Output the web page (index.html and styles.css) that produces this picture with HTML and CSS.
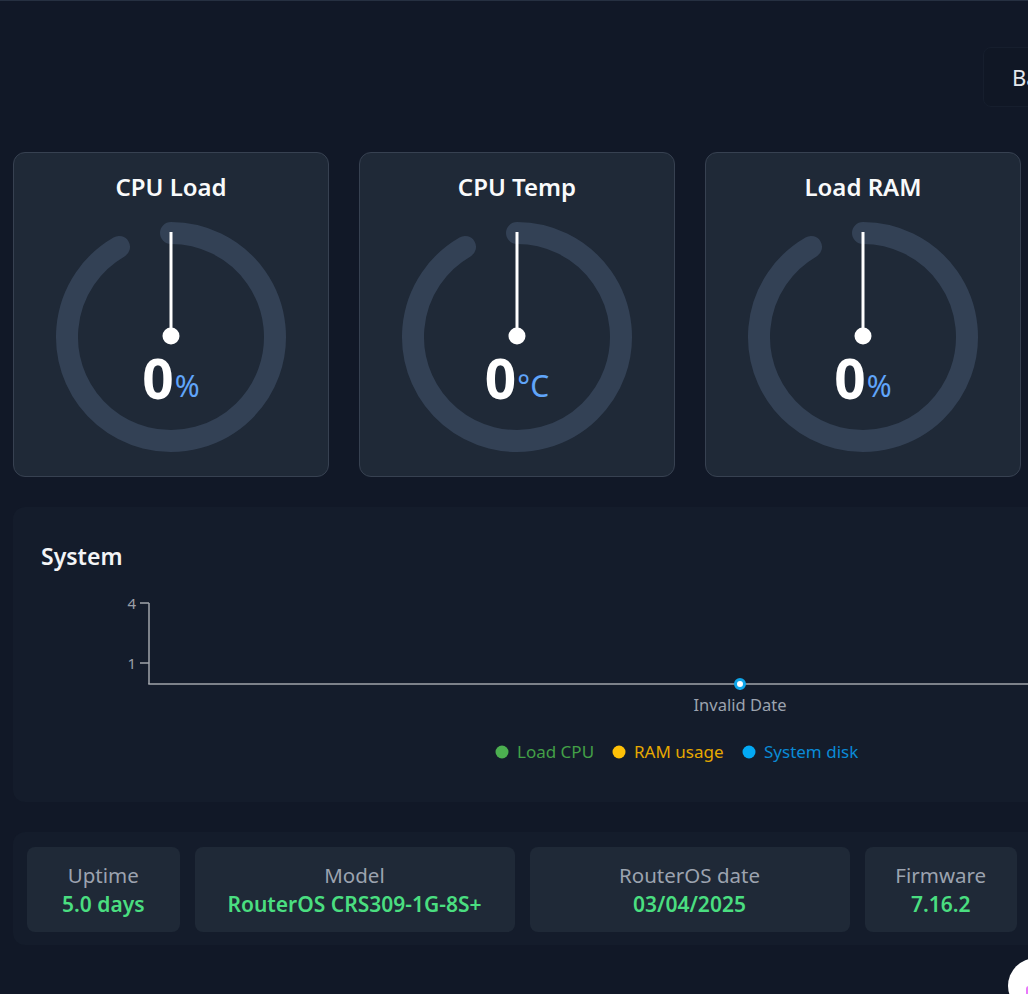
FILE: index.html
```html
<!DOCTYPE html>
<html lang="en">
<head>
<meta charset="utf-8">
<title>Dashboard</title>
<link rel="stylesheet" href="styles.css">
</head>
<body>
<div class="page">
  <header class="toolbar">
    <button class="tool-btn">Backup</button>
  </header>

  <section class="gauges">
    <div class="gauge-card">
      <h3 class="gauge-title">CPU Load</h3>
      <div class="gauge">
        <svg class="gauge-svg" width="240" height="240" viewBox="0 0 240 240">
          <path class="gauge-track" d="M120 16 A104 104 0 1 1 68 29.93"/>
          <line class="gauge-needle" x1="120" y1="15" x2="120" y2="119"/>
          <circle class="gauge-hub" cx="120" cy="119" r="8.5"/>
        </svg>
        <div class="gauge-value"><span class="num">0</span><span class="unit">%</span></div>
      </div>
    </div>
    <div class="gauge-card">
      <h3 class="gauge-title">CPU Temp</h3>
      <div class="gauge">
        <svg class="gauge-svg" width="240" height="240" viewBox="0 0 240 240">
          <path class="gauge-track" d="M120 16 A104 104 0 1 1 68 29.93"/>
          <line class="gauge-needle" x1="120" y1="15" x2="120" y2="119"/>
          <circle class="gauge-hub" cx="120" cy="119" r="8.5"/>
        </svg>
        <div class="gauge-value"><span class="num">0</span><span class="unit">°C</span></div>
      </div>
    </div>
    <div class="gauge-card">
      <h3 class="gauge-title">Load RAM</h3>
      <div class="gauge">
        <svg class="gauge-svg" width="240" height="240" viewBox="0 0 240 240">
          <path class="gauge-track" d="M120 16 A104 104 0 1 1 68 29.93"/>
          <line class="gauge-needle" x1="120" y1="15" x2="120" y2="119"/>
          <circle class="gauge-hub" cx="120" cy="119" r="8.5"/>
        </svg>
        <div class="gauge-value"><span class="num">0</span><span class="unit">%</span></div>
      </div>
    </div>
  </section>

  <section class="panel chart-panel">
    <h2 class="panel-title">System</h2>
    <svg class="chart" width="1320" height="200" viewBox="0 0 1320 200">
      <g class="axis">
        <line x1="108" y1="32" x2="108" y2="113"/>
        <line x1="99" y1="32" x2="108" y2="32"/>
        <line x1="99" y1="92" x2="108" y2="92"/>
        <line x1="107.25" y1="113" x2="1320" y2="113"/>
        <line x1="699" y1="113" x2="699" y2="119"/>
      </g>
      <text class="tick-label" x="95" y="38" text-anchor="end">4</text>
      <text class="tick-label" x="95" y="98" text-anchor="end">1</text>
      <circle class="point" cx="699" cy="113" r="4.5"/>
      <text class="x-label" x="699" y="140" text-anchor="middle">Invalid Date</text>
      <g class="legend">
        <circle cx="461" cy="181" r="6.5" fill="#4caf50"/>
        <text x="476" y="187" fill="#43a047">Load CPU</text>
        <circle cx="578" cy="181" r="6.5" fill="#ffc107"/>
        <text x="593" y="187" fill="#e6a800">RAM usage</text>
        <circle cx="708" cy="181" r="6.5" fill="#03a9f4"/>
        <text x="723" y="187" fill="#0a8ad6">System disk</text>
      </g>
    </svg>
  </section>

  <section class="panel stats-panel">
    <div class="stat span-1">
      <div class="stat-label">Uptime</div>
      <div class="stat-value">5.0 days</div>
    </div>
    <div class="stat span-2">
      <div class="stat-label">Model</div>
      <div class="stat-value">RouterOS CRS309-1G-8S+</div>
    </div>
    <div class="stat span-2">
      <div class="stat-label">RouterOS date</div>
      <div class="stat-value">03/04/2025</div>
    </div>
    <div class="stat span-1">
      <div class="stat-label">Firmware</div>
      <div class="stat-value">7.16.2</div>
    </div>
  </section>
</div>

<div class="fab"><span class="fab-dot"></span></div>
</body>
</html>
```

FILE: styles.css
```css
html, body {
  margin: 0;
  padding: 0;
  overflow: hidden;
  background: #111827;
}

body {
  font-family: "Noto Sans", "Open Sans", sans-serif;
  color: #f3f4f6;
  border-top: 1px solid #263041;
  min-height: 993px;
}

.page {
  width: 1380px;
  padding: 0 13px;
  box-sizing: border-box;
}

.toolbar {
  display: flex;
  padding-top: 46px;
  height: 60px;
}

.tool-btn {
  margin-left: 970px;
  height: 60px;
  padding: 0 24px 0 28px;
  background: #101725;
  border: 1px solid #161e2d;
  border-radius: 8px;
  color: #e5e7eb;
  font-family: inherit;
  font-size: 22px;
  line-height: 58px;
}

.gauges {
  display: grid;
  grid-template-columns: repeat(3, 316px);
  gap: 30px;
  margin-top: 45px;
}

.gauge-card {
  height: 325px;
  box-sizing: border-box;
  background: #1f2937;
  border: 1px solid #374151;
  border-radius: 12px;
  padding-top: 18px;
  display: flex;
  flex-direction: column;
  align-items: center;
}

.gauge-title {
  margin: 0;
  font-size: 24px;
  line-height: 32px;
  font-weight: 600;
  color: #f9fafb;
}

.gauge {
  position: relative;
  width: 240px;
  height: 240px;
  margin-top: 14px;
}

.gauge-svg {
  display: block;
}

.gauge-track {
  fill: none;
  stroke: #334155;
  stroke-width: 22;
  stroke-linecap: round;
}

.gauge-needle {
  stroke: #ffffff;
  stroke-width: 3;
}

.gauge-hub {
  fill: #ffffff;
}

.gauge-value {
  position: absolute;
  left: 0;
  right: 0;
  top: 133px;
  display: flex;
  justify-content: center;
  align-items: baseline;
  gap: 2px;
  line-height: 1;
}

.gauge-value .num {
  font-size: 55px;
  font-weight: 700;
  color: #ffffff;
  letter-spacing: -1px;
}

.gauge-value .unit {
  font-size: 30px;
  color: #60a5fa;
  position: relative;
  top: -2px;
}

.panel {
  background: #141c2b;
  border-radius: 12px;
  width: 1354px;
  box-sizing: border-box;
}

.chart-panel {
  margin-top: 30px;
  height: 295px;
  padding: 34px 0 0 28px;
}

.panel-title {
  margin: 0;
  font-size: 23px;
  line-height: 30px;
  font-weight: 600;
  color: #f3f4f6;
}

.chart {
  display: block;
}

.axis line {
  stroke: #a1a5ab;
  stroke-width: 1.5;
}

.tick-label {
  font-family: "Noto Sans", sans-serif;
  font-size: 15px;
  fill: #9a9fa7;
}

.point {
  fill: #ffffff;
  stroke: #0ea5e9;
  stroke-width: 3;
}

.x-label {
  font-family: "Noto Sans", sans-serif;
  font-size: 16.5px;
  fill: #9ca3af;
}

.legend text {
  font-family: "Noto Sans", sans-serif;
  font-size: 17px;
}

.stats-panel {
  margin-top: 30px;
  padding: 15px 14px 13px;
  display: grid;
  grid-template-columns: repeat(6, 152.5px);
  gap: 15px;
}

.stat {
  background: #1f2937;
  border-radius: 8px;
  height: 85px;
  box-sizing: border-box;
  padding-top: 14px;
  text-align: center;
}

.span-1 { grid-column: span 1; }
.span-2 { grid-column: span 2; }

.stat-label {
  font-size: 20.5px;
  line-height: 29px;
  color: #9ca3af;
}

.stat-value {
  font-size: 21px;
  line-height: 29px;
  font-weight: 600;
  color: #4ade80;
}

.fab {
  position: fixed;
  left: 1008px;
  top: 958px;
  width: 56px;
  height: 56px;
  border-radius: 50%;
  background: #ffffff;
}

.fab-dot {
  position: absolute;
  left: 18px;
  top: 28px;
  width: 6px;
  height: 10px;
  border-radius: 3px;
  background: #e879f9;
}
```
